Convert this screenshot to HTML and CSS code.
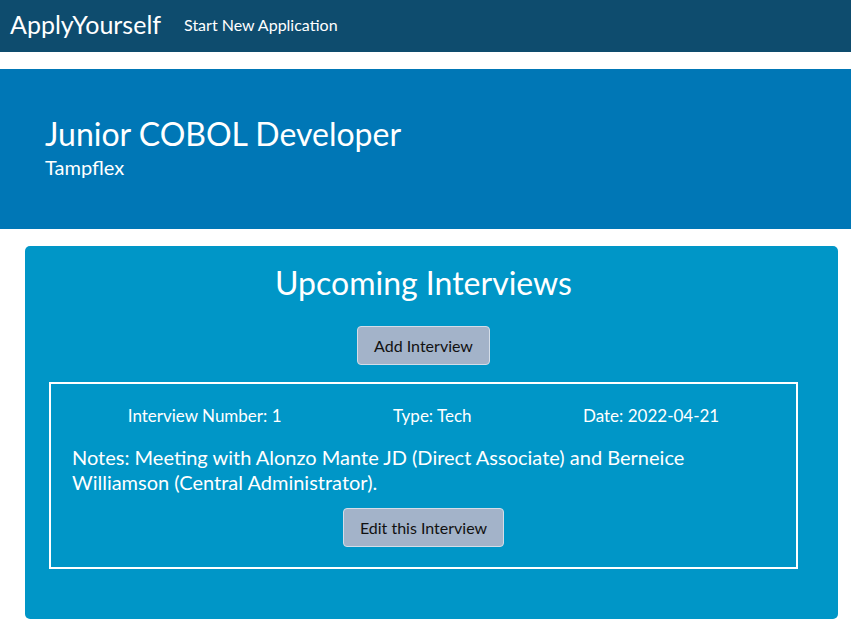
FILE: index.html
```html
<!DOCTYPE html>
<html>
<head>
<meta charset="utf-8">
<link rel="stylesheet" href="styles.css">
</head>
<body>
<nav class="navbar">
  <span class="brand">ApplyYourself</span>
  <a class="nav-link" href="#">Start New Application</a>
</nav>
<header class="hero">
  <h1 class="hero-title">Junior COBOL Developer</h1>
  <p class="hero-sub">Tampflex</p>
</header>
<main class="content">
  <section class="card">
    <h2 class="card-title">Upcoming Interviews</h2>
    <div class="btn-row"><button class="btn">Add Interview</button></div>
    <div class="interview">
      <div class="meta">
        <span>Interview Number: 1</span>
        <span>Type: Tech</span>
        <span>Date: 2022-04-21</span>
      </div>
      <p class="notes">Notes: Meeting with Alonzo Mante JD (Direct Associate) and Berneice Williamson (Central Administrator).</p>
      <div class="btn-row"><button class="btn">Edit this Interview</button></div>
    </div>
  </section>
</main>
</body>
</html>
```
FILE: styles.css
```css
* { box-sizing: border-box; }
body {
  margin: 0;
  font-family: Lato, "Open Sans", sans-serif;
  color: #fff;
  background: #fff;
}
.navbar {
  height: 52px;
  background: #0e4c6e;
  display: flex;
  align-items: center;
  padding: 0 10px;
}
.brand {
  font-size: 25px;
  color: #fff;
  margin-right: 23px;
  position: relative;
  top: -2px;
}
.nav-link {
  font-size: 16px;
  color: #fff;
  text-decoration: none;
  position: relative;
  top: -2px;
}
.hero {
  margin-top: 17px;
  height: 160px;
  background: #0077b6;
  padding: 46px 45px 0;
}
.hero-title {
  margin: 0;
  font-size: 32px;
  font-weight: 400;
  line-height: 1.2;
}
.hero-sub {
  margin: 2px 0 0;
  font-size: 20px;
  line-height: 1.2;
}
.content {
  padding: 17px 13px 0 25px;
}
.card {
  background: #0096c7;
  border-radius: 5px;
  padding: 18px 40px 50px 24px;
}
.card-title {
  margin: 0;
  text-align: center;
  font-size: 32px;
  font-weight: 400;
  line-height: 1.2;
}
.btn-row {
  display: flex;
  justify-content: center;
}
.card > .btn-row { margin-top: 24px; margin-bottom: 17px; }
.btn {
  font-family: inherit;
  font-size: 16px;
  color: #111;
  background: #a3b3c9;
  border: 1px solid #d4dde8;
  border-radius: 4px;
  padding: 0 16px;
  height: 39px;
}
.interview {
  border: 2px solid #fff;
  padding: 22px 21px 20px;
}
.meta {
  display: flex;
  justify-content: space-around;
  font-size: 17px;
  line-height: 1.2;
}
.notes {
  margin: 18px 0 13px;
  font-size: 20px;
  line-height: 25px;
}
```
